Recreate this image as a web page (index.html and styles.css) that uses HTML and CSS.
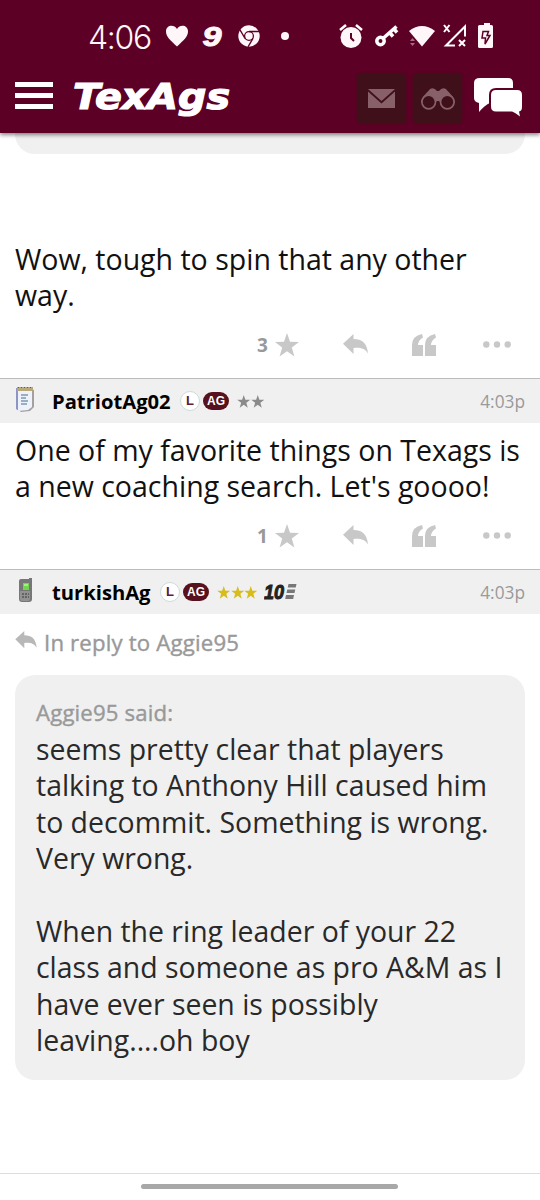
FILE: index.html
```html
<!DOCTYPE html>
<html lang="en">
<head>
<meta charset="utf-8">
<meta name="viewport" content="width=device-width">
<title>TexAgs</title>
<link rel="stylesheet" href="styles.css">
</head>
<body>
<svg class="defs" aria-hidden="true">
  <symbol id="star" viewBox="0 0 24 24"><path d="M12 0l3 8.700 9 .2-7.200 5.600 2.600 8.900L12 18.200l-7.400 5.200 2.600-8.900L0 8.900l9-.2z"/></symbol>
  <symbol id="reply" viewBox="0 0 25 21"><path d="M0 9.700L10.500 0v5C19 5 24 9 25 19.500c-3-4.800-7-6.200-14.500-5.600V20z"/></symbol>
  <symbol id="quote" viewBox="0 0 24 22"><path d="M10 0l1 3.500Q6.300 6 6 11H11v11H0V11Q0 2 10 0zM23 0l1 3.500Q19.300 6 19 11H24v11H13V11Q13 2 23 0z"/></symbol>
  <symbol id="dots" viewBox="0 0 28 7"><circle cx="3.300" cy="3.500" r="3.200"/><circle cx="14" cy="3.500" r="3.200"/><circle cx="24.700" cy="3.500" r="3.200"/></symbol>
</svg>
<header class="top">
  <div class="status">
    <span class="clock">4:06</span>
    <svg class="notices" viewBox="160 20 140 34">
      <path d="M177 46.500C170 40 166 36.500 166 31.500c0-6.500 8-7.500 11-2.500 3-5 11-4 11 2.500 0 5-4 8.500-11 15z"/>
      <text class="nine" x="202.500" y="45.500" textLength="19" lengthAdjust="spacingAndGlyphs">9</text>
      <circle cx="249" cy="36" r="10.700"/>
      <g class="cut"><path d="M249 31.500h10M253 38.300l-5 8.500M245 38.300l-5-8.500"/><circle cx="249" cy="36" r="4.400"/></g>
      <circle cx="285" cy="36" r="4"/>
    </svg>
    <svg class="system" viewBox="335 20 165 34">
      <circle cx="351" cy="37.500" r="10.500"/><g class="line"><path d="M340 30l6-5M356 25l6 5"/></g>
      <path class="cut hand" d="M351 33v5l3 3"/>
      <circle class="key" cx="380.500" cy="41" r="3.700"/><path class="key" d="M383.500 38l13-11.500M390 33l3 3.500M394 29l3 3.500"/>
      <path d="M409 31q13-10 26 0l-13 15.500z"/><path class="faint" d="M410 41l2.500-3 2.500 3zM410 43h5l-2.500 3z"/>
      <path class="signal" d="M455 45.500h-9l19-19v10M444 25l5.500 7M449.500 25l-5.500 7M459 40l6 6M465 40l-6 6"/>
      <path d="M481 25h3v-2h6v2h1.500q1.500 0 1.500 1.500v20q0 1.500-1.500 1.500H479.500q-1.500 0-1.500-1.500v-20q0-1.500 1.500-1.500z"/>
      <path class="cut bolt" d="M483 31.500h5.500l-1.500 4h3l-5 8.500.5-6h-3.500z"/>
    </svg>
  </div>
  <nav class="nav">
    <div class="menu"><i></i><i></i><i></i></div>
    <svg class="logo" viewBox="0 0 164 50"><text x="0" y="32" textLength="157" lengthAdjust="spacingAndGlyphs">TexAgs</text></svg>
    <div class="tile"><svg class="mail" viewBox="0 0 27 19"><path d="M0 0h27L13.500 12zM0 2.500l13.500 12L27 2.500V19H0z"/></svg></div>
    <div class="tile"><svg class="binoc" viewBox="0 0 34 22"><path d="M0 14C2 7 6 5 9 1q4-2 7 2h2q3-4 7-2c3 4 7 6 9 13l-8 7-8-8h-2l-8 8z"/><circle class="lens" cx="7.700" cy="14" r="6.800"/><circle class="lens" cx="26.300" cy="14" r="6.800"/></svg></div>
    <svg class="chat" viewBox="0 0 48 39"><path d="M6 0h28q5 0 5 5v15q0 5-5 5H16q-5 2-11 9v-9q-5-1-5-5V5q0-5 6-5z"/><path class="bubble" d="M22 12h21q5 0 5 5v12q0 4-3 4.500l1 5q-5-4-8-5H22q-5 0-5-5V17q0-5 5-5z"/></svg>
  </nav>
</header>
<main>
  <article class="post first">
    <div class="quote-end"></div>
    <p class="body">Wow, tough to spin that any other<br>way.</p>
    <div class="actions"><b>3</b><svg class="a-star"><use href="#star"/></svg><svg class="a-reply"><use href="#reply"/></svg><svg class="a-quote"><use href="#quote"/></svg><svg class="a-dots"><use href="#dots"/></svg></div>
  </article>
  <article class="post second">
    <div class="meta">
      <svg class="device" viewBox="0 0 20 28"><path fill="#a4a0a0" d="M2 23l4 3 9-1 4-4V4l-2-1z"/><path fill="#8e95c2" d="M1 2h3v23l-3-2z"/><path fill="#edf2fb" d="M3 3h14v18l-4 3-10 1z"/><path fill="#b9a978" d="M2 1h16v4H2z"/><path stroke="#665e48" stroke-dasharray="1 2" d="M3 1.500h14"/><path stroke="#7e9bb0" stroke-width="1.500" d="M6 9h7M6 12h5M6 15h7M6 18h6"/></svg>
      <b class="user u1">PatriotAg02</b><span class="level">L</span><span class="ag">AG</span>
      <span class="stars gray"><svg><use href="#star"/></svg><svg><use href="#star"/></svg></span>
      <time>4:03p</time>
    </div>
    <p class="body">One of my favorite things on Texags is<br>a new coaching search. Let's goooo!</p>
    <div class="actions"><b>1</b><svg class="a-star"><use href="#star"/></svg><svg class="a-reply"><use href="#reply"/></svg><svg class="a-quote"><use href="#quote"/></svg><svg class="a-dots"><use href="#dots"/></svg></div>
  </article>
  <article class="post third">
    <div class="meta">
      <svg class="device" viewBox="0 0 20 28"><path fill="#777" d="M4 4q0-2 2-2h8V1h3v21q0 3-3 3H7q-3 0-3-3z"/><path fill="#929292" d="M5 14h10v8q0 2-2 2H7q-2 0-2-2z"/><path fill="#6fd64d" d="M8 6h6v7H8z"/><path fill="#a0f37e" d="M9 7h4v2H9z"/><path stroke="#555" stroke-width="1.300" stroke-dasharray="2 1" d="M7 17h7M7 20h7"/></svg>
      <b class="user u2">turkishAg</b><span class="level">L</span><span class="ag">AG</span>
      <span class="stars gold"><svg><use href="#star"/></svg><svg><use href="#star"/></svg><svg><use href="#star"/></svg></span>
      <svg class="ten" viewBox="0 0 36 26"><text x="0" y="20" textLength="20" lengthAdjust="spacingAndGlyphs">10</text><path d="M24.500 5h8l-.8 3.500h-8zM23.300 10.500h8l-.8 3.500h-8zM22 16h8l-.8 4h-8z"/></svg>
      <time>4:03p</time>
    </div>
    <div class="reply-to"><svg><use href="#reply"/></svg><span>In reply to Aggie95</span></div>
    <blockquote><cite>Aggie95 said:</cite><p>seems pretty clear that players<br>talking to Anthony Hill caused him<br>to decommit. Something is wrong.<br>Very wrong.<br><br>When the ring leader of your 22<br>class and someone as pro A&amp;M as I<br>have ever seen is possibly<br>leaving....oh boy</p></blockquote>
  </article>
</main>
<footer><div class="home"></div></footer>
</body>
</html>
```

FILE: styles.css
```css
* { box-sizing: border-box; }
body { margin: 0; width: 540px; height: 1200px; overflow: hidden; display: flex; flex-direction: column; background: #fff; color: #111; font-family: "Open Sans", "Noto Sans", sans-serif; }
p, blockquote { margin: 0; }
svg { display: block; flex: none; }
.defs { width: 0; height: 0; position: absolute; }
.top { height: 133px; flex: none; background: #5d0025; box-shadow: 0 2px 4px #0007; z-index: 1; color: #fff; }
.status { height: 73px; display: flex; padding: 20px 40px 0 88px; }
.status svg { fill: #fff6fa; height: 34px; }
.clock { width: 72px; font: 300 32px/36px Inter, sans-serif; letter-spacing: -1.300px; color: #fff6fa; }
.notices { width: 140px; }
.nine { font: italic bold 27px "Liberation Sans", sans-serif; stroke: #fff6fa; }
.system { width: 165px; margin-left: 35px; }
.cut { fill: none; stroke: #5d0025; stroke-width: 1.300; }
.hand { stroke-width: 2; }
.line { stroke: #fff; stroke-width: 2.500; }
.status .key { fill: none; stroke: #fff; stroke-width: 3.500; }
.status .faint { fill: #a96b84; }
.signal { fill: none; stroke: #fff; stroke-width: 2; }
.status .bolt { fill: #fff6fa; stroke-width: 1.500; }
.nav { height: 60px; display: flex; padding: 0 18px 0 15px; }
.menu { width: 38px; padding-top: 9px; display: flex; flex-direction: column; gap: 6px; }
.menu i { height: 5px; background: #fff; }
.logo { width: 164px; height: 50px; margin: 4px 120px 0 20px; }
.logo text { fill: #fff; stroke: #fff; stroke-width: 1.200; font: italic bold 35px "DejaVu Sans", sans-serif; }
.tile { width: 49px; height: 49px; margin: 1px 7px 0 0; border-radius: 4px; background: #3f101a; display: grid; place-items: center; box-shadow: 0 0 3px #3f101a; }
.tile svg { fill: #876069; }
.mail { width: 27px; height: 19px; }
.binoc { width: 34px; height: 22px; }
.lens { fill: #3f101a; stroke: #876069; stroke-width: 1.700; }
.chat { width: 48px; height: 39px; margin: 5px 0 0 5px; fill: #fff; }
.bubble { stroke: #5d0025; stroke-width: 4; paint-order: stroke; }
main { height: 1040px; flex: none; }
.first { height: 245px; }
.quote-end { height: 21px; margin: 0 15px 87px; background: #f0f0f0; border-radius: 0 0 20px 20px; }
.body { font-size: 28.500px; line-height: 36.400px; padding: 0 15px; white-space: nowrap; }
.actions { height: 34px; margin-top: 14px; padding: 0 29px 0 257px; display: flex; align-items: center; color: #999; fill: #c8c8c8; }
.actions b { width: 18px; font-size: 19px; }
.a-star { width: 24px; height: 24px; }
.a-reply { width: 25px; height: 21px; margin-left: 44px; }
.a-quote { width: 24px; height: 22px; margin-left: 44px; }
.a-dots { width: 28px; height: 7px; margin-left: 47px; }
.second { height: 191px; }
.meta { height: 45px; border-top: 1.500px solid #bcbcbc; background: #f0f0f0; display: flex; align-items: center; padding: 0 15px; }
.second .body { padding-top: 9px; }
.device { width: 20px; height: 28px; margin-right: 17px; margin-top: -3px; }
.user { font-size: 20.200px; color: #000; white-space: nowrap; flex: none; }
.u1 { width: 128px; }
.u2 { width: 108px; }
.level { width: 20px; height: 20px; border: 1px solid #cddbd7; border-radius: 50%; background: #fff; color: #5b2030; font: bold 13px/18px "Liberation Sans", sans-serif; text-align: center; }
.ag { width: 26px; height: 18px; border-radius: 9px; background: #58111e; color: #fff; font: bold 12px/18px "Liberation Sans", sans-serif; text-align: center; margin-left: 3px; }
.stars { display: flex; margin-left: 8px; }
.stars svg { width: 13.500px; height: 13px; }
.gray { fill: #8a8a8a; }
.gold { fill: #d7bd19; }
time { margin-left: auto; color: #999; font-size: 17.300px; }
.ten { width: 36px; height: 26px; margin-left: 6px; fill: #777; }
.ten text { fill: #222; stroke: #222; font: italic bold 20px "Liberation Sans", sans-serif; }
.reply-to { height: 61px; display: flex; align-items: center; padding: 0 0 4px 15px; color: #999; font-size: 22.200px; letter-spacing: .18px; -webkit-text-stroke: .4px #999; }
.reply-to svg { width: 22px; height: 18px; fill: #b8b8b8; margin-right: 7px; margin-top: -5px; }
blockquote { height: 405px; margin: 0 15px; padding: 23px 21px; background: #f0f0f0; border-radius: 20px; color: #292929; font-size: 28.430px; line-height: 36.400px; white-space: nowrap; }
cite { display: block; height: 33px; line-height: 29px; font-size: 22.200px; letter-spacing: .15px; -webkit-text-stroke: .4px #999; font-style: normal; color: #999; }
footer { height: 27px; border-top: 1px solid #ddd; padding-top: 10px; }
.home { width: 257px; height: 5px; margin-left: 141px; border-radius: 3px; background: #a8a8a8; }
```
